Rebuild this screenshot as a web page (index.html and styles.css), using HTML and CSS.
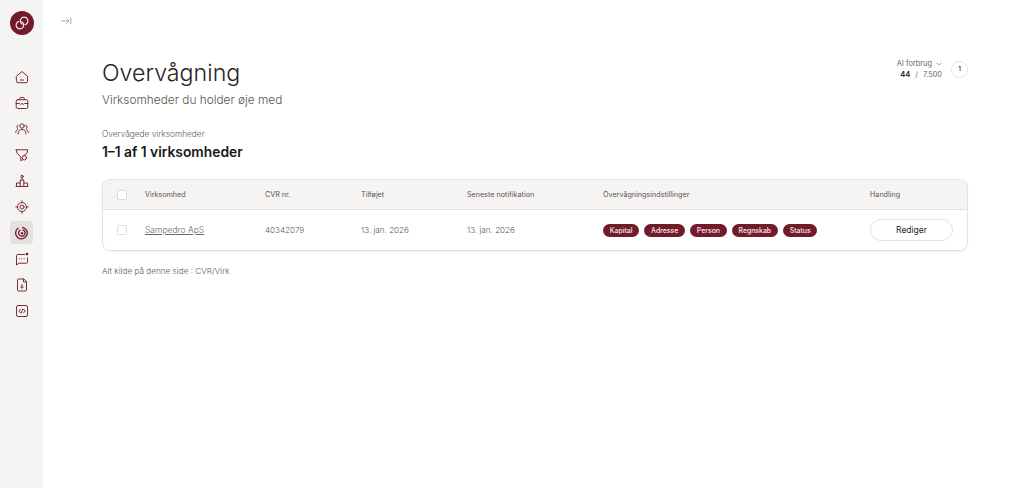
FILE: index.html
```html
<!DOCTYPE html>
<html lang="da">
<head>
<meta charset="utf-8">
<title>Overvågning</title>
<link rel="stylesheet" href="styles.css">
</head>
<body>
<div class="app">
  <nav class="sidebar">
    <div class="logo">
      <svg viewBox="0 0 24 24" width="20" height="20" fill="none" stroke="#f5e4e5" stroke-width="1.400" stroke-linecap="round">
        <path d="M15.840 13.900A4.600 4.600 0 1 0 12.410 13.600"/>
        <path d="M8.160 10.100A4.600 4.600 0 1 0 11.590 10.400"/>
      </svg>
    </div>
    <ul class="nav-list">
      <li class="nav-item"><svg class="nav-icon" viewBox="0 0 14 14"><path d="M1.500 6.200 7 1.500l5.500 4.700v5a1.500 1.500 0 0 1-1.500 1.500H3a1.500 1.500 0 0 1-1.500-1.500z"/><path d="M5.500 10h3"/></svg></li>
      <li class="nav-item"><svg class="nav-icon" viewBox="0 0 14 14"><rect x="1.200" y="3.700" width="11.600" height="8.800" rx="1.500"/><path d="M4.700 3.700V2.500a1 1 0 0 1 1-1h2.600a1 1 0 0 1 1 1v1.200M1.200 7.500h3.300l1 .8 1.500-.8 1.500.8 1-.8h3.300"/></svg></li>
      <li class="nav-item"><svg class="nav-icon" viewBox="0 0 14 14"><circle cx="7" cy="4" r="2.200"/><path d="M3 12c0-3 1.500-4.500 4-4.500S11 9 11 12M3.300 3.300a1.700 1.700 0 0 0-.5 3.200M.8 10.500c0-1.500.7-2.600 1.800-3M10.700 3.300a1.700 1.700 0 0 1 .5 3.200M13.200 10.500c0-1.500-.7-2.600-1.800-3"/></svg></li>
      <li class="nav-item"><svg class="nav-icon" viewBox="0 0 14 14"><path d="M1.200 1.800h11.600l-.8 3.400-3 2.300M1.200 1.800 2 5.200l3.800 3.600v4l1.400-.8"/><circle cx="9.300" cy="9.800" r="2.200"/></svg></li>
      <li class="nav-item"><svg class="nav-icon" viewBox="0 0 14 14"><circle cx="7" cy="2.500" r="1.200"/><path d="M5.200 12.500V6h3.600v6.500M1.500 12.500V9h3.700M12.500 12.500V9H8.800M1 12.500h12M7 3.700V6"/></svg></li>
      <li class="nav-item"><svg class="nav-icon" viewBox="0 0 14 14"><circle cx="7" cy="7" r="4.500"/><circle cx="7" cy="7" r="2"/><path d="M7 .8v1.700M7 11.500v1.700M.8 7h1.700M11.500 7h1.700"/></svg></li>
      <li class="nav-item is-active"><svg class="nav-icon bold" viewBox="0 0 14 14"><path d="M3 2.300A5.800 5.800 0 1 0 7.500 1.300"/><path d="M5 4.200A3.300 3.300 0 1 0 7.800 3.800"/><circle class="fill" cx="7" cy="7.200" r="1.200"/></svg></li>
      <li class="nav-item"><svg class="nav-icon" viewBox="0 0 14 14"><path d="M9.500 2.500H2.500a1 1 0 0 0-1 1V13l2.500-1.800h7.500a1 1 0 0 0 1-1V6"/><path d="M4.300 6.800h.1M6.700 6.800h.1M9.100 6.800h.1"/><circle class="dot" cx="12" cy="2" r="1.300"/></svg></li>
      <li class="nav-item"><svg class="nav-icon" viewBox="0 0 14 14"><path d="M8.500 1H3.500a1 1 0 0 0-1 1v10a1 1 0 0 0 1 1h7a1 1 0 0 0 1-1V4z"/><path d="M8.500 1v3h3M7 6.500v3.500M5.500 8.700 7 10.200l1.500-1.500"/></svg></li>
      <li class="nav-item"><svg class="nav-icon" viewBox="0 0 14 14"><rect x="1.500" y="1.500" width="11" height="11" rx="1.500"/><path d="M5.300 5.300 3.800 7l1.500 1.700M8.700 5.300 10.200 7 8.700 8.700M7.700 5 6.300 9"/></svg></li>
    </ul>
  </nav>

  <main class="main">
    <div class="topbar">
      <svg class="collapse" viewBox="0 0 11 8" width="11" height="8"><path d="M0 4h8M5.500 1.500 8 4 5.500 6.500M9.800 .8v6.400"/></svg>
    </div>

    <header class="page-head">
      <div>
        <h1 class="title">Overvågning</h1>
        <p class="subtitle">Virksomheder du holder øje med</p>
      </div>
      <div class="usage">
        <div class="usage-text">
          <div class="usage-label">AI forbrug <svg class="chev" viewBox="0 0 8 5" width="6" height="4"><path d="M1 1l3 3 3-3"/></svg></div>
          <div class="usage-count"><b>44</b><span class="sep">/</span>7.500</div>
        </div>
        <div class="usage-badge">1</div>
      </div>
    </header>

    <section class="results">
      <p class="results-label">Overvågede virksomheder</p>
      <h2 class="results-count">1–1 af 1 virksomheder</h2>
    </section>

    <div class="table">
      <div class="row head">
        <span class="check"></span>
        <span>Virksomhed</span>
        <span>CVR nr.</span>
        <span>Tilføjet</span>
        <span>Seneste notifikation</span>
        <span>Overvågningsindstillinger</span>
        <span>Handling</span>
      </div>
      <div class="row body">
        <span class="check"></span>
        <a class="link" href="#">Sampedro ApS</a>
        <span>40342079</span>
        <span>13. jan. 2026</span>
        <span>13. jan. 2026</span>
        <span class="tags">
          <span class="tag">Kapital</span>
          <span class="tag">Adresse</span>
          <span class="tag">Person</span>
          <span class="tag">Regnskab</span>
          <span class="tag">Status</span>
        </span>
        <button class="btn">Rediger</button>
      </div>
    </div>

    <p class="source">Alt kilde på denne side : CVR/Virk</p>
  </main>
</div>
</body>
</html>
```
FILE: styles.css
```css
* { box-sizing: border-box; }
html, body { margin: 0; height: 100%; }
body { font-family: "Inter", "Liberation Sans", sans-serif; color: #1f1a1a; background: #fff; overflow: hidden; }
.app { display: flex; height: 488px; }

.sidebar { width: 43px; flex: none; background: #f6f4f2; display: flex; flex-direction: column; align-items: center; padding-top: 11px; }
.logo { width: 24px; height: 24px; border-radius: 50%; background: #721c2b; display: flex; align-items: center; justify-content: center; }
.nav-list { list-style: none; margin: 30px 0 0; padding: 0; display: flex; flex-direction: column; gap: 3px; }
.nav-item { width: 23px; height: 23px; border-radius: 4px; display: flex; align-items: center; justify-content: center; }
.nav-item.is-active { background: #e4e2e0; }
.nav-icon { width: 14px; height: 14px; fill: none; stroke: #7a2c3a; stroke-width: 1; stroke-linecap: round; stroke-linejoin: round; }
.nav-icon.bold { stroke: #721c2b; stroke-width: 1.300; }
.nav-icon .dot, .nav-icon .fill { fill: #721c2b; stroke: none; }

.main { flex: 1; padding: 0 56px 0 59px; }
.topbar { height: 43px; padding-top: 17px; margin-left: -41px; }
.collapse { display: block; fill: none; stroke: #a9a5a3; stroke-width: 1; }

.page-head { display: flex; justify-content: space-between; align-items: flex-start; }
.title { margin: 14px 0 0; font-size: 23.200px; line-height: 32px; font-weight: 300; color: #2a2525; }
.subtitle { margin: 2px 0 0; font-size: 11.850px; line-height: 18px; font-weight: 300; color: #5c5350; }

.usage { display: flex; align-items: center; gap: 9px; margin-top: 15px; }
.usage-text { text-align: right; font-size: 7.400px; line-height: 11px; color: #6e6663; }
.usage-label { display: flex; align-items: center; gap: 4px; justify-content: flex-end; }
.chev { fill: none; stroke: #8a8280; stroke-width: 1; }
.usage-count b { font-weight: 700; color: #3a3230; }
.sep { margin: 0 5px; }
.usage-badge { width: 17px; height: 17px; border-radius: 50%; border: 1.500px solid #e6e4e2; display: flex; align-items: center; justify-content: center; font-size: 6.500px; font-weight: 500; color: #2a2525; }

.results { margin-top: 19px; }
.results-label { margin: 0; font-size: 8.300px; line-height: 12px; font-weight: 300; color: #5f5754; }
.results-count { margin: 2px 0 0; font-size: 13.800px; line-height: 20px; font-weight: 600; color: #1a1515; }

.table { margin-top: 17px; border: 1px solid #e5e3e1; border-radius: 8px; overflow: hidden; box-shadow: 0 1px 2px rgba(0,0,0,.05); }
.row { display: grid; grid-template-columns: 28px 120px 96px 106px 136px 267px 83px; align-items: center; padding-left: 14px; font-size: 8.100px; font-weight: 300; color: #5f5754; }
.head { height: 30px; background: #f6f4f2; border-bottom: 1px solid #e5e3e1; font-size: 7.200px; color: #5c5350; font-weight: 400; }
.body { height: 40px; }
.check { width: 10px; height: 10px; border: 1px solid #dedcda; border-radius: 2px; background: #fff; }
.link { color: #6e6663; text-decoration: underline; font-size: 8.500px; }
.tags { display: flex; gap: 5px; }
.tag { height: 13px; padding: 0 6.800px; border-radius: 7px; background: #721c2b; color: #f6e9ea; font-size: 6.900px; line-height: 13px; font-weight: 500; }
.btn { height: 22px; width: 83px; border: 1px solid #e5e3e1; border-radius: 11px; background: #fff; font: 400 8.500px "Inter", "Liberation Sans", sans-serif; color: #2a2525; padding: 0; }

.source { margin: 14px 0 0; font-size: 8.200px; line-height: 12px; font-weight: 300; color: #5f5754; }
```
